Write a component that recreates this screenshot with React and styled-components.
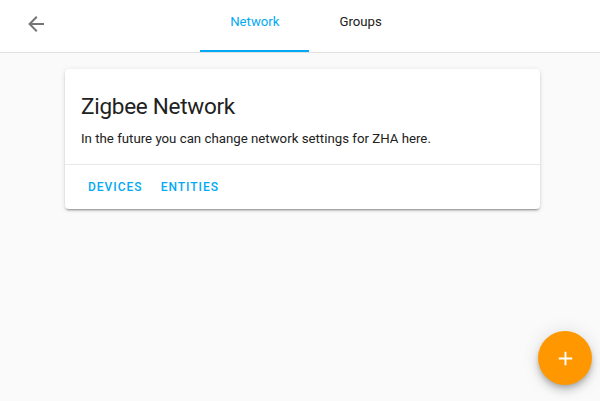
import styled, { createGlobalStyle } from "styled-components";

const GlobalStyle = createGlobalStyle`
  html, body {
    margin: 0;
    padding: 0;
    background: #fafafa;
    font-family: Roboto, "Noto Sans", sans-serif;
    -webkit-font-smoothing: antialiased;
  }
`;

const Page = styled.div`
  min-height: 100vh;
  background: #fafafa;
`;

const Header = styled.header`
  display: flex;
  align-items: flex-start;
  height: 52px;
  padding: 0 48px 0 12px;
  background: #fff;
  border-bottom: 1px solid #e0e0e0;
`;

const IconButton = styled.button`
  width: 48px;
  height: 48px;
  padding: 12px;
  border: 0;
  background: none;
  color: #757575;
  cursor: pointer;
  display: flex;
  align-items: center;
  justify-content: center;

  svg {
    width: 24px;
    height: 24px;
    display: block;
  }
`;

const Tabs = styled.nav`
  flex: 1;
  display: flex;
  justify-content: center;
  height: 52px;
`;

const Tab = styled.div`
  box-sizing: border-box;
  height: 52px;
  padding: 12px 30px 0;
  font-size: 13.2px;
  line-height: 20px;
  color: ${(p) => (p.active ? "#03a9f4" : "#212121")};
  border-bottom: 2px solid ${(p) => (p.active ? "#03a9f4" : "transparent")};
  cursor: pointer;
`;

const Content = styled.main`
  display: flex;
  justify-content: center;
  padding: 16px 0 0 5px;
`;

const Card = styled.section`
  width: 475px;
  background: #fff;
  border-radius: 4px;
  box-shadow: 0 2px 2px 0 rgba(0, 0, 0, 0.14), 0 1px 5px 0 rgba(0, 0, 0, 0.12),
    0 3px 1px -2px rgba(0, 0, 0, 0.2);
`;

const CardHeader = styled.h1`
  margin: 0;
  padding: 14px 16px 0;
  font-size: 22.5px;
  font-weight: 400;
  line-height: 46px;
  letter-spacing: -0.012em;
  color: #212121;
`;

const CardContent = styled.p`
  margin: 0;
  padding: 0 16px 15px;
  font-size: 13.25px;
  line-height: 20px;
  color: #212121;
`;

const CardActions = styled.div`
  display: flex;
  gap: 2px;
  padding: 4px 15px;
  border-top: 1px solid #e8e8e8;
`;

const ActionButton = styled.button`
  height: 36px;
  padding: 0 8px;
  border: 0;
  background: none;
  font-family: inherit;
  font-size: 12px;
  font-weight: 500;
  letter-spacing: 1px;
  text-transform: uppercase;
  color: #03a9f4;
  cursor: pointer;
`;

const Fab = styled.button`
  position: fixed;
  right: 8px;
  bottom: 16px;
  width: 54px;
  height: 54px;
  border-radius: 50%;
  border: 0;
  background: #ff9800;
  color: #fff;
  display: flex;
  align-items: center;
  justify-content: center;
  box-shadow: 0 3px 5px -1px rgba(0, 0, 0, 0.2), 0 6px 10px 0 rgba(0, 0, 0, 0.14),
    0 1px 18px 0 rgba(0, 0, 0, 0.12);
  cursor: pointer;

  svg {
    width: 23px;
    height: 23px;
  }
`;

const App = () => {
  return (
    <Page>
      <GlobalStyle />
      <Header>
        <IconButton aria-label="Back">
          <svg viewBox="0 0 24 24">
            <path
              fill="currentColor"
              d="M20,11V13H8L13.5,18.5L12.08,19.92L4.16,12L12.08,4.08L13.5,5.5L8,11H20Z"
            />
          </svg>
        </IconButton>
        <Tabs>
          <Tab active>Network</Tab>
          <Tab>Groups</Tab>
        </Tabs>
      </Header>
      <Content>
        <Card>
          <CardHeader>Zigbee Network</CardHeader>
          <CardContent>
            In the future you can change network settings for ZHA here.
          </CardContent>
          <CardActions>
            <ActionButton>Devices</ActionButton>
            <ActionButton>Entities</ActionButton>
          </CardActions>
        </Card>
      </Content>
      <Fab aria-label="Add">
        <svg viewBox="0 0 24 24">
          <path fill="currentColor" d="M19,13H13V19H11V13H5V11H11V5H13V11H19V13Z" />
        </svg>
      </Fab>
    </Page>
  );
};

export default App;
